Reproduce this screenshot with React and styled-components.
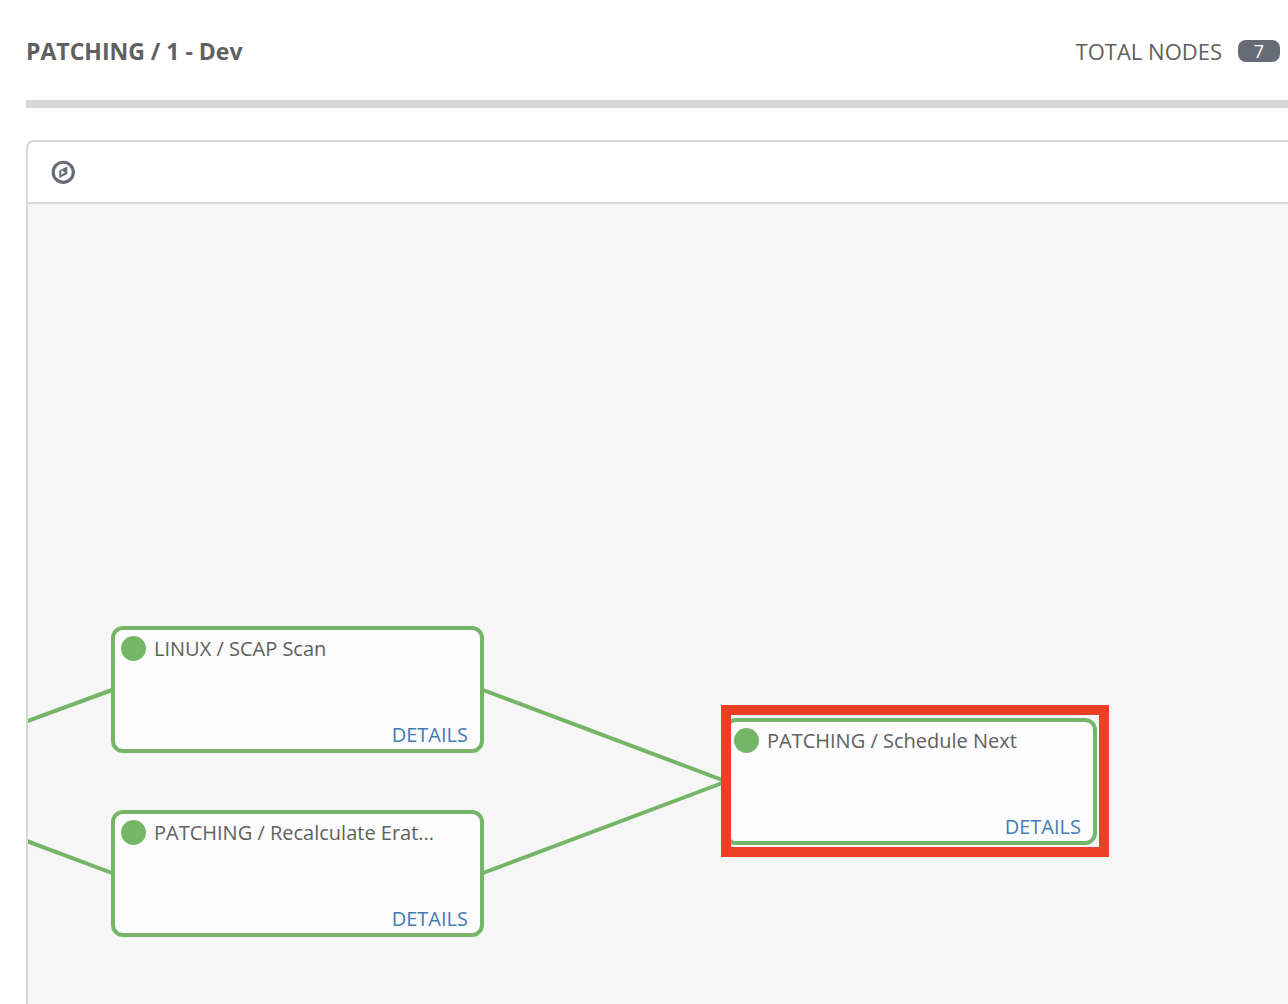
import React from "react";
import styled, { createGlobalStyle } from "styled-components";

const color = {
  text: "#606060",
  rule: "#d7d7d7",
  slate: "#666b75",
  success: "#75b567",
  link: "#427cb8",
  highlight: "#ec4024",
};

const GlobalStyle = createGlobalStyle`
  *, *::before, *::after {
    box-sizing: border-box;
  }

  body {
    margin: 0;
    background: #fff;
    color: ${color.text};
    font-family: "Open Sans", "Noto Sans", sans-serif;
  }
`;

const Page = styled.main`
  display: flex;
  flex-direction: column;
  min-height: 100vh;
  padding-left: 26px;
`;

const Header = styled.header`
  display: flex;
  align-items: center;
  justify-content: space-between;
  height: 108px;
  padding: 2px 8px 0 0;
  border-bottom: 8px solid ${color.rule};
`;

const Title = styled.h1`
  margin: 0;
  font-size: 23px;
  font-weight: 700;
  line-height: 32px;
`;

const Total = styled.div`
  display: flex;
  align-items: center;
  gap: 16px;
  font-size: 22px;
  line-height: 32px;
`;

const Badge = styled.span`
  width: 42px;
  height: 22px;
  border-radius: 8px;
  background: ${color.slate};
  color: #fff;
  font-size: 18px;
  line-height: 22px;
  text-align: center;
`;

const Panel = styled.section`
  display: flex;
  flex: 1;
  flex-direction: column;
  margin-top: 32px;
  border: solid ${color.rule};
  border-width: 2px 0 0 2px;
  border-top-left-radius: 8px;
  overflow: hidden;
`;

const Toolbar = styled.div`
  display: flex;
  align-items: center;
  height: 62px;
  padding: 0 23px;
  border-bottom: 2px solid ${color.rule};
`;

const IconButton = styled.button`
  display: flex;
  padding: 0;
  border: 0;
  background: none;
  color: ${color.slate};
  cursor: pointer;
`;

const Canvas = styled.div`
  position: relative;
  flex: 1;
  min-height: 760px;
  background: #f6f6f6;
  overflow: hidden;
`;

const Links = styled.svg`
  position: absolute;
  top: 0;
  left: 0;
  width: 100%;
  height: 100%;
  fill: none;
  stroke: ${color.success};
  stroke-width: 4;
`;

const Node = styled.article`
  position: absolute;
  top: ${({ $y }) => $y}px;
  left: ${({ $x }) => $x}px;
  display: flex;
  flex-direction: column;
  justify-content: space-between;
  width: 373px;
  height: 127px;
  padding: 6px 12px 0 6px;
  border: 4px solid ${color.success};
  border-radius: 12px;
  background: #fcfcfc;
`;

const NodeTitle = styled.div`
  display: flex;
  align-items: center;
  gap: 8px;
  font-size: 20px;
  line-height: 25px;
  white-space: nowrap;
`;

const Status = styled.span`
  width: 25px;
  height: 25px;
  border-radius: 50%;
  background: ${color.success};
`;

const Details = styled.a`
  align-self: flex-end;
  color: ${color.link};
  font-size: 20px;
  line-height: 28px;
  text-decoration: none;
`;

const Highlight = styled.div`
  position: absolute;
  top: 501px;
  left: 693px;
  width: 388px;
  height: 152px;
  border: 10px solid ${color.highlight};
  pointer-events: none;
`;

const nodes = [
  { id: "scap", x: 83, y: 422, title: "LINUX / SCAP Scan" },
  { id: "errata", x: 83, y: 606, title: "PATCHING / Recalculate Erat..." },
  { id: "next", x: 696, y: 514, title: "PATCHING / Schedule Next" },
];

function CompassIcon() {
  return (
    <svg width="24" height="24" viewBox="112 112 1536 1536" fill="currentColor" aria-hidden="true">
      <path
        fillRule="evenodd"
        d="M768 1051l256-143-256-143zM1152 525v486l-512 256v-486zM1440 896a544 544 0 1 0-1088 0a544 544 0 1 0 1088 0zM1640 896a744 744 0 1 1-1488 0a744 744 0 1 1 1488 0z"
      />
    </svg>
  );
}

export default function App() {
  return (
    <>
      <GlobalStyle />
      <Page>
        <Header>
          <Title>PATCHING / 1 - Dev</Title>
          <Total>
            <span>TOTAL NODES</span>
            <Badge>7</Badge>
          </Total>
        </Header>
        <Panel>
          <Toolbar>
            <IconButton type="button" aria-label="Toggle legend">
              <CompassIcon />
            </IconButton>
          </Toolbar>
          <Canvas>
            <Links aria-hidden="true">
              <path d="M-60 539L84 486M-60 615L84 669M455 486L697 577M455 669L697 578" />
            </Links>
            {nodes.map((node) => (
              <Node key={node.id} $x={node.x} $y={node.y}>
                <NodeTitle>
                  <Status />
                  <span>{node.title}</span>
                </NodeTitle>
                <Details href={`#${node.id}`}>DETAILS</Details>
              </Node>
            ))}
            <Highlight />
          </Canvas>
        </Panel>
      </Page>
    </>
  );
}
